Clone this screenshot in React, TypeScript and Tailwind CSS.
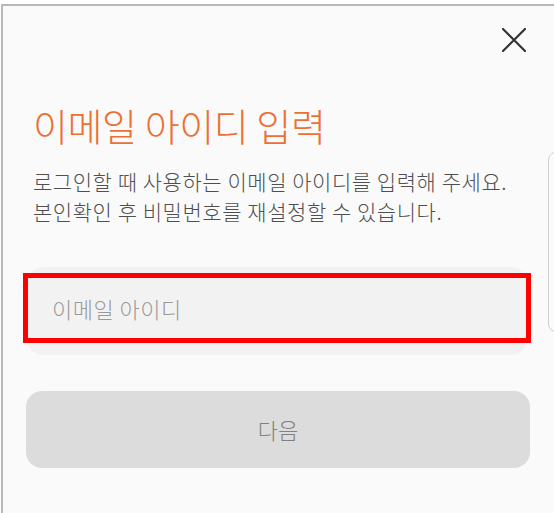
import React from "react";

export default function App() {
  const font = { fontFamily: '"Noto Sans CJK KR", "Noto Sans", sans-serif' };
  return (
    <div className="w-[554px] h-[513px] bg-white overflow-hidden" style={font}>
      <div className="relative ml-px mt-1 h-[509px] border-l-2 border-t-2 border-[#b8b8b8] bg-[#fafafa] overflow-hidden">
        {/* peeking card on right edge */}
        <div className="absolute left-[545px] top-[146px] w-[40px] h-[180px] rounded-lg border border-[#cfcfcf] bg-[#fafafa]" />

        <div className="flex justify-end pr-[28px] pt-[22px]">
          <svg width="24" height="24" viewBox="0 0 24 24" fill="none">
            <path d="M1 1 L23 23 M23 1 L1 23" stroke="#333" strokeWidth="2.2" strokeLinecap="round" />
          </svg>
        </div>

        <h1 className="mt-[49px] ml-[30px] text-[38px] leading-[48px] font-light text-[#ec6f33] tracking-[-0.4px]">
          이메일 아이디 입력
        </h1>

        <p className="mt-[17px] ml-[30px] text-[21px] leading-[30px] font-light text-[#4f4f4f] tracking-[0.55px]">
          로그인할 때 사용하는 이메일 아이디를 입력해 주세요.
          <br />
          본인확인 후 비밀번호를 재설정할 수 있습니다.
        </p>

        <div className="relative mt-[41px] ml-[24px] w-[500px] h-[88px] rounded-2xl bg-[#f2f2f2]">
          <div className="absolute -left-[4px] -right-[4px] top-[6px] bottom-[12px] border-[5px] border-[#ff0000] bg-[#f2f2f2] flex items-center pl-[24px]">
            <span className="text-[22px] font-light tracking-[0.5px] text-[#9a9a9a]">이메일 아이디</span>
          </div>
        </div>

        <button className="mt-[36px] ml-[23px] w-[504px] h-[77px] rounded-2xl bg-[#dcdcdc] flex items-center justify-center text-[22px] font-light text-[#808080]">
          다음
        </button>
      </div>
    </div>
  );
}
